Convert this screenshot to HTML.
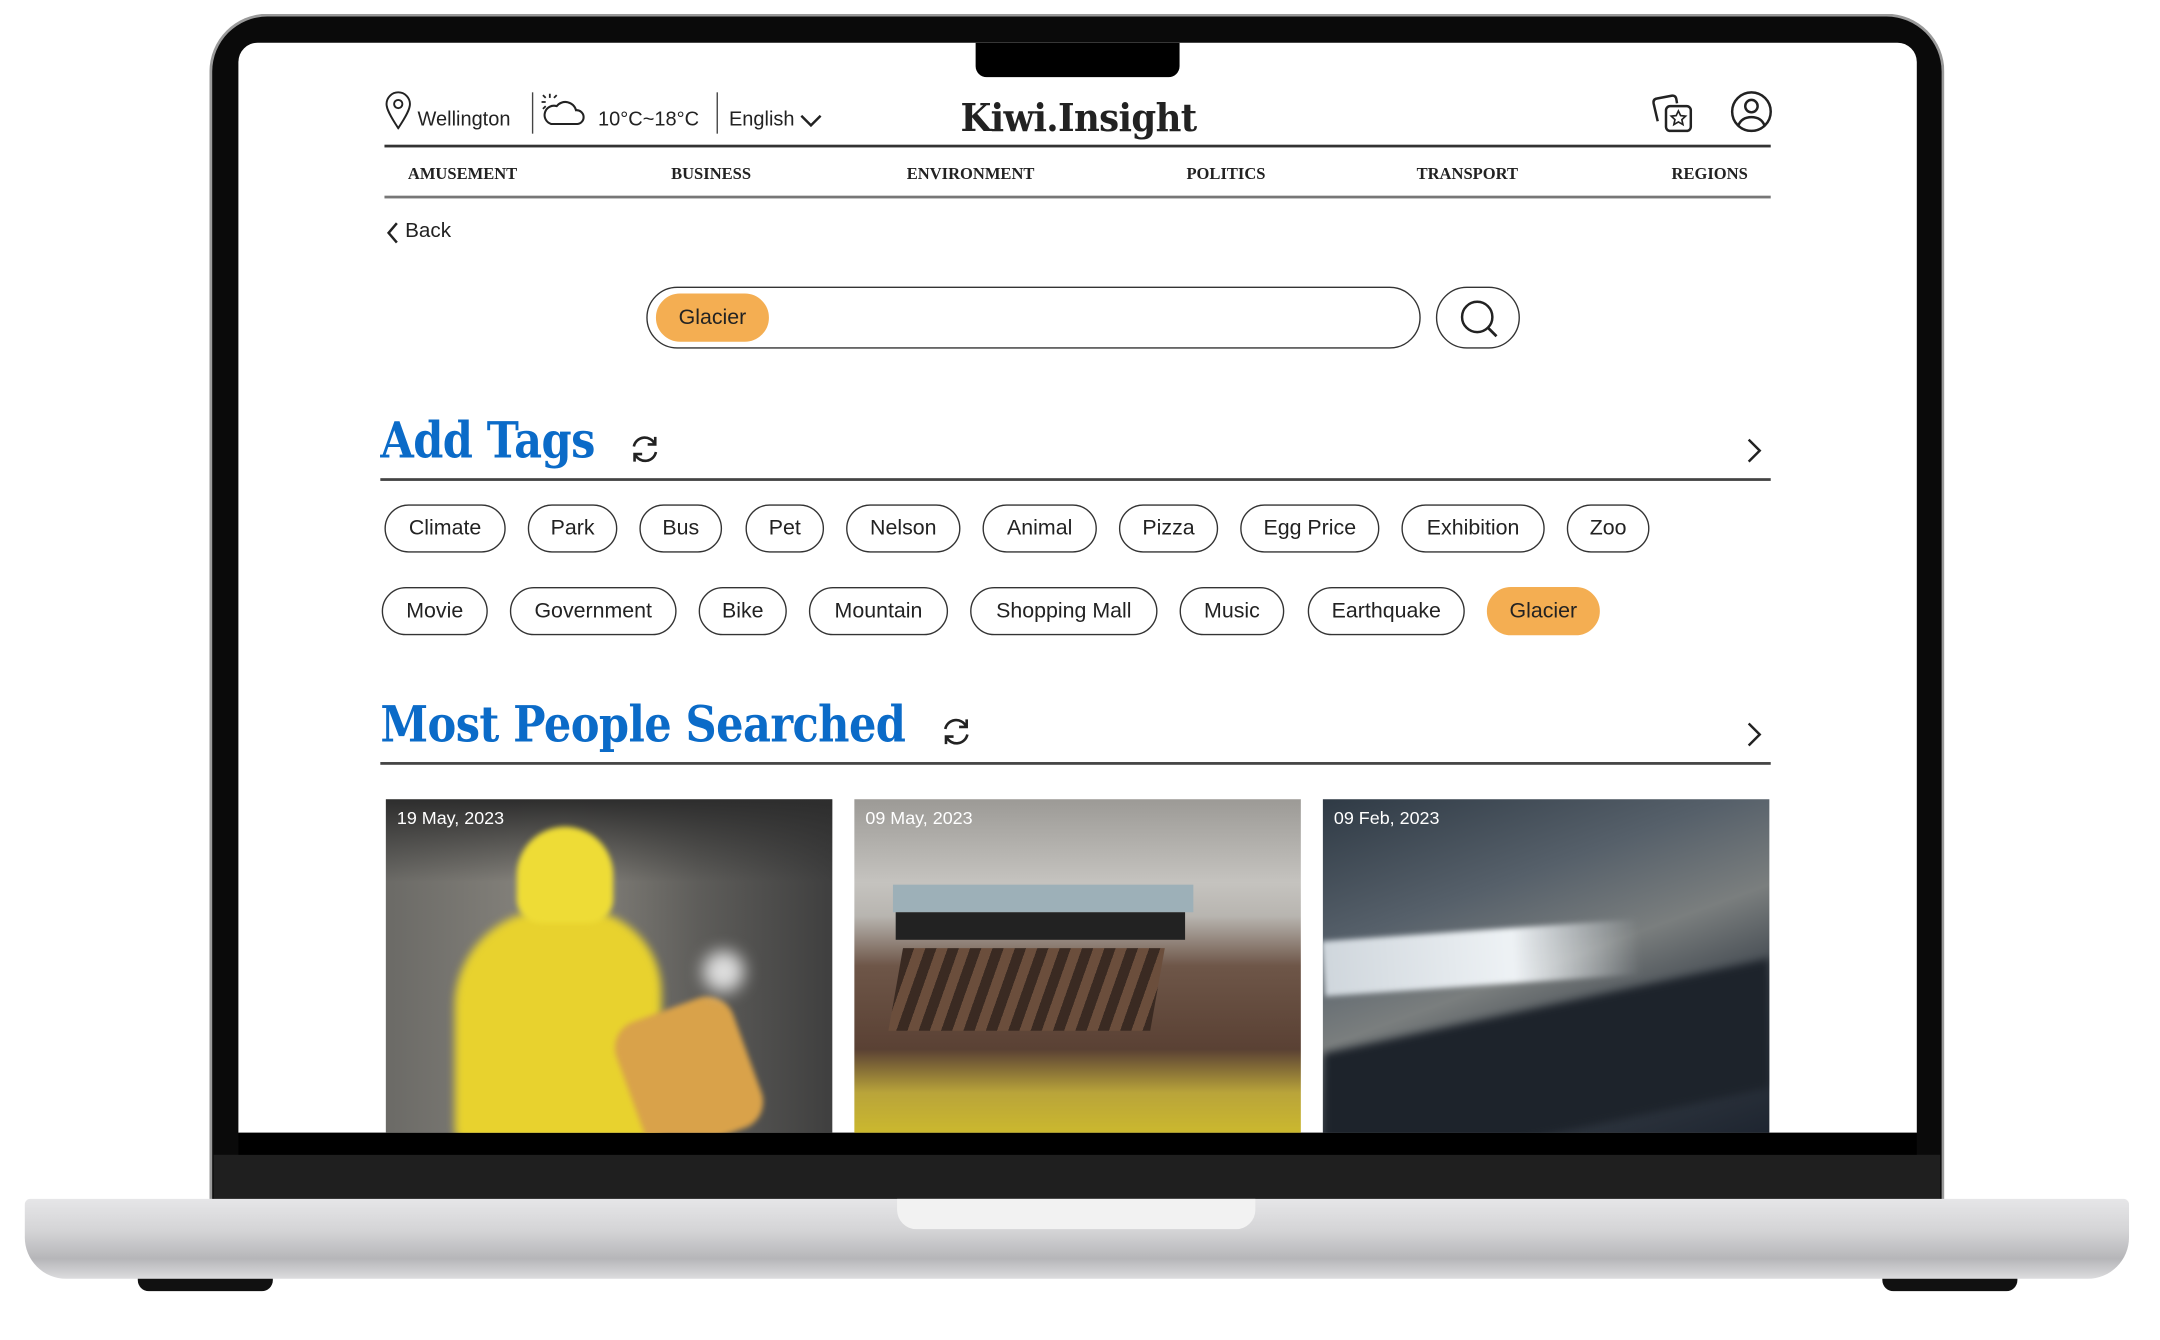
<!DOCTYPE html>
<html><head><meta charset="utf-8"><style>
*{margin:0;padding:0;box-sizing:border-box}
html,body{width:2160px;height:1340px;background:#fff;overflow:hidden}
#w{position:absolute;left:0;top:0;width:1568px;height:972px;transform:scale(1.378);transform-origin:0 0;font-family:"Liberation Sans",sans-serif;color:#222}
.a{position:absolute}
.serif{font-family:"DejaVu Serif","Liberation Serif",serif;font-weight:bold;transform-origin:0 0;white-space:nowrap}
.tag{position:absolute;height:35px;border:1px solid #333;border-radius:18px;font-size:15.5px;line-height:33px;text-align:center;color:#222}
.or{background:#F4AE52;border-color:#F4AE52}
.nav{position:absolute;top:119px;font-family:"Liberation Serif",serif;font-weight:bold;font-size:12px;color:#222}
.date{position:absolute;left:8px;top:6px;color:#fff;font-size:13px}
</style></head><body><div id="w">
<div class="a" style="left:152px;top:10px;width:1259px;height:866px;background:#0a0a0a;border-radius:42px 42px 0 0;border:2px solid #9a9a9a;border-bottom:none"></div>
<div class="a" style="left:155px;top:838px;width:1253px;height:36px;background:#1f1f1f"></div>
<div class="a" style="left:18px;top:870px;width:1527px;height:58px;background:linear-gradient(#e6e6e8,#d4d4d6 40%,#b6b6b9 75%,#dcdcde);border-radius:4px 4px 30px 30px"></div>
<div class="a" style="left:651px;top:870px;width:260px;height:22px;background:#f2f2f2;border-radius:0 0 14px 14px"></div>
<div class="a" style="left:100px;top:928px;width:98px;height:9px;background:#111;border-radius:0 0 8px 8px"></div>
<div class="a" style="left:1366px;top:928px;width:98px;height:9px;background:#111;border-radius:0 0 8px 8px"></div>
<div class="a" style="left:173px;top:31px;width:1218px;height:791px;background:#fff;border-radius:14px 14px 0 0;overflow:hidden">
<div class="a" style="left:535px;top:0;width:148px;height:25px;background:#000;border-radius:0 0 8px 8px"></div>
</div>
<div class="a" style="left:173px;top:822px;width:1218px;height:16px;background:#000"></div>

<svg class="a" style="left:279px;top:66px" width="20" height="28" viewBox="0 0 20 28"><path d="M10 27C4 18 1.5 13 1.5 9.5A8.5 8.5 0 0 1 18.5 9.5C18.5 13 16 18 10 27Z" fill="none" stroke="#222" stroke-width="1.4"/><circle cx="10" cy="9.5" r="3" fill="none" stroke="#222" stroke-width="1.4"/></svg>
<div class="a" style="left:303px;top:79px;font-size:14.5px">Wellington</div>
<div class="a" style="left:386px;top:67px;width:1px;height:30px;background:#444"></div>
<svg class="a" style="left:391px;top:66px" width="34" height="28" viewBox="0 0 34 28"><path d="M9 24H28A5 5 0 0 0 27 14A8 8 0 0 0 13 11A6 6 0 0 0 9 24Z" fill="none" stroke="#222" stroke-width="1.5"/><path d="M8 2v3M2 8h3M3 3l2 2M13 3l-2 2M3 13l2-2" stroke="#222" stroke-width="1.3"/></svg>
<div class="a" style="left:434px;top:79px;font-size:14.5px">10°C~18°C</div>
<div class="a" style="left:520px;top:67px;width:1px;height:30px;background:#444"></div>
<div class="a" style="left:529px;top:79px;font-size:14.5px">English</div>
<svg class="a" style="left:580px;top:82px" width="17" height="12" viewBox="0 0 17 12"><path d="M1.5 2l7 7 7-7" fill="none" stroke="#222" stroke-width="1.8"/></svg>
<div class="a serif" style="left:697px;top:69px;font-size:28px;color:#222;letter-spacing:-0.5px;transform:scaleX(0.92)">Kiwi.Insight</div>
<svg class="a" style="left:1197px;top:64px" width="34" height="34" viewBox="0 0 34 34"><path d="M6 24L3 11Q2.5 8 5.5 7.5L16 5.5Q19 5 19.5 8L20 11" fill="none" stroke="#222" stroke-width="1.8"/><rect x="12" y="13" width="18" height="18" rx="3" fill="none" stroke="#222" stroke-width="1.8"/><path d="M21 16.5l1.6 3.4 3.6.4-2.7 2.5.8 3.6-3.3-1.9-3.3 1.9.8-3.6-2.7-2.5 3.6-.4z" fill="none" stroke="#222" stroke-width="1.2"/></svg>
<svg class="a" style="left:1255px;top:65px" width="32" height="32" viewBox="0 0 32 32"><circle cx="16" cy="16" r="14" fill="none" stroke="#222" stroke-width="1.8"/><circle cx="16" cy="12" r="4.5" fill="none" stroke="#222" stroke-width="1.8"/><path d="M6.5 26Q9 20 16 20T25.5 26" fill="none" stroke="#222" stroke-width="1.8"/></svg>
<div class="a" style="left:279px;top:105px;width:1006px;height:2px;background:#333"></div>
<div class="nav" style="left:296px">AMUSEMENT</div>
<div class="nav" style="left:487px">BUSINESS</div>
<div class="nav" style="left:658px">ENVIRONMENT</div>
<div class="nav" style="left:861px">POLITICS</div>
<div class="nav" style="left:1028px">TRANSPORT</div>
<div class="nav" style="left:1213px">REGIONS</div>
<div class="a" style="left:279px;top:142px;width:1006px;height:2px;background:#777"></div>
<svg class="a" style="left:279px;top:160px" width="12" height="18" viewBox="0 0 12 18"><path d="M9 2L3 9l6 7" fill="none" stroke="#222" stroke-width="1.8"/></svg>
<div class="a" style="left:294px;top:159px;font-size:15px">Back</div>

<div class="a" style="left:469px;top:208px;width:562px;height:45px;border:1px solid #333;border-radius:23px"></div>
<div class="tag or" style="left:476px;top:213px;width:82px">Glacier</div>
<div class="a" style="left:1042px;top:208px;width:61px;height:45px;border:1px solid #333;border-radius:23px"></div>
<svg class="a" style="left:1058px;top:216px" width="30" height="30" viewBox="0 0 30 30"><circle cx="14" cy="14" r="11" fill="none" stroke="#222" stroke-width="1.8"/><path d="M22 22l6 6" stroke="#222" stroke-width="2"/></svg>

<div class="a serif" style="left:276px;top:299px;font-size:36px;color:#0B6BC8;letter-spacing:-0.5px;transform:scaleX(0.87)">Add Tags</div>
<svg class="a" style="left:456px;top:314px" width="24" height="24" viewBox="0 0 24 24"><path d="M4 10A8 8 0 0 1 19 8M20 14A8 8 0 0 1 5 16" fill="none" stroke="#222" stroke-width="1.9"/><path d="M19.5 3v5.5H14M4.5 21v-5.5H10" fill="none" stroke="#222" stroke-width="1.9"/></svg>
<svg class="a" style="left:1266px;top:317px" width="14" height="20" viewBox="0 0 14 20"><path d="M3 2l8 8-8 8" fill="none" stroke="#222" stroke-width="1.8"/></svg>
<div class="a" style="left:276px;top:347px;width:1009px;height:1.5px;background:#444"></div>
<div class="tag" style="left:279px;top:366px;width:88px">Climate</div>
<div class="tag" style="left:383px;top:366px;width:65px">Park</div>
<div class="tag" style="left:464px;top:366px;width:60px">Bus</div>
<div class="tag" style="left:541px;top:366px;width:57px">Pet</div>
<div class="tag" style="left:614px;top:366px;width:83px">Nelson</div>
<div class="tag" style="left:713px;top:366px;width:83px">Animal</div>
<div class="tag" style="left:812px;top:366px;width:72px">Pizza</div>
<div class="tag" style="left:900px;top:366px;width:101px">Egg Price</div>
<div class="tag" style="left:1017px;top:366px;width:104px">Exhibition</div>
<div class="tag" style="left:1137px;top:366px;width:60px">Zoo</div>
<div class="tag" style="left:277px;top:426px;width:77px">Movie</div>
<div class="tag" style="left:370px;top:426px;width:121px">Government</div>
<div class="tag" style="left:507px;top:426px;width:64px">Bike</div>
<div class="tag" style="left:587px;top:426px;width:101px">Mountain</div>
<div class="tag" style="left:704px;top:426px;width:136px">Shopping Mall</div>
<div class="tag" style="left:856px;top:426px;width:76px">Music</div>
<div class="tag" style="left:949px;top:426px;width:114px">Earthquake</div>
<div class="tag or" style="left:1079px;top:426px;width:82px">Glacier</div>

<div class="a serif" style="left:276px;top:505px;font-size:36px;color:#0B6BC8;letter-spacing:-0.5px;transform:scaleX(0.87)">Most People Searched</div>
<svg class="a" style="left:682px;top:519px" width="24" height="24" viewBox="0 0 24 24"><path d="M4 10A8 8 0 0 1 19 8M20 14A8 8 0 0 1 5 16" fill="none" stroke="#222" stroke-width="1.9"/><path d="M19.5 3v5.5H14M4.5 21v-5.5H10" fill="none" stroke="#222" stroke-width="1.9"/></svg>
<svg class="a" style="left:1266px;top:523px" width="14" height="20" viewBox="0 0 14 20"><path d="M3 2l8 8-8 8" fill="none" stroke="#222" stroke-width="1.8"/></svg>
<div class="a" style="left:276px;top:553px;width:1009px;height:1.5px;background:#444"></div>

<div class="a" style="left:280px;top:580px;width:324px;height:242px;overflow:hidden;background:linear-gradient(90deg,#6b6a66,#8a8780 40%,#5e5d5a 70%,#3f3f3f)">
 <div class="a" style="left:0;top:0;width:324px;height:60px;background:linear-gradient(#2d2d2d,rgba(60,60,60,0))"></div>
 <div class="a" style="left:50px;top:80px;width:150px;height:170px;background:#E8D22E;border-radius:70px 60px 10px 10px;filter:blur(3px)"></div>
 <div class="a" style="left:95px;top:20px;width:70px;height:70px;background:#EEDC36;border-radius:40px 40px 20px 20px;filter:blur(2px)"></div>
 <div class="a" style="left:175px;top:150px;width:90px;height:100px;background:#D9A24A;border-radius:20px;transform:rotate(-20deg);filter:blur(2px)"></div>
 <div class="a" style="left:230px;top:110px;width:30px;height:30px;background:#ddd;border-radius:50%;filter:blur(6px)"></div>
 <div class="date">19 May, 2023</div>
</div>
<div class="a" style="left:620px;top:580px;width:324px;height:242px;overflow:hidden;background:linear-gradient(#9c9a96,#c5c3bf 25%,#b8b5b0 35%,#6e5648 50%,#5a4134 75%,#b9a43a 88%,#cbb82e)">
 <div class="a" style="left:28px;top:62px;width:218px;height:20px;background:#9db0b8"></div>
 <div class="a" style="left:30px;top:82px;width:210px;height:20px;background:#222"></div>
 <div class="a" style="left:30px;top:108px;width:190px;height:60px;background:repeating-linear-gradient(100deg,#3a2a22 0 8px,#6b4e3c 8px 16px);transform:skewX(-10deg)"></div>
 <div class="date">09 May, 2023</div>
</div>
<div class="a" style="left:960px;top:580px;width:324px;height:242px;overflow:hidden;background:linear-gradient(160deg,#2f3a45,#56606a 30%,#7a7e7e 50%,#3a4149 70%,#1e2530)">
 <div class="a" style="left:0;top:95px;width:230px;height:40px;background:linear-gradient(90deg,#cfd6dc,#eef2f5 60%,rgba(220,225,230,0));transform:rotate(-4deg);filter:blur(2px)"></div>
 <div class="a" style="left:0;top:150px;width:324px;height:94px;background:#1d232b;transform:skewY(-12deg);filter:blur(3px)"></div>
 <div class="date">09 Feb, 2023</div>
</div>
</div></body></html>
